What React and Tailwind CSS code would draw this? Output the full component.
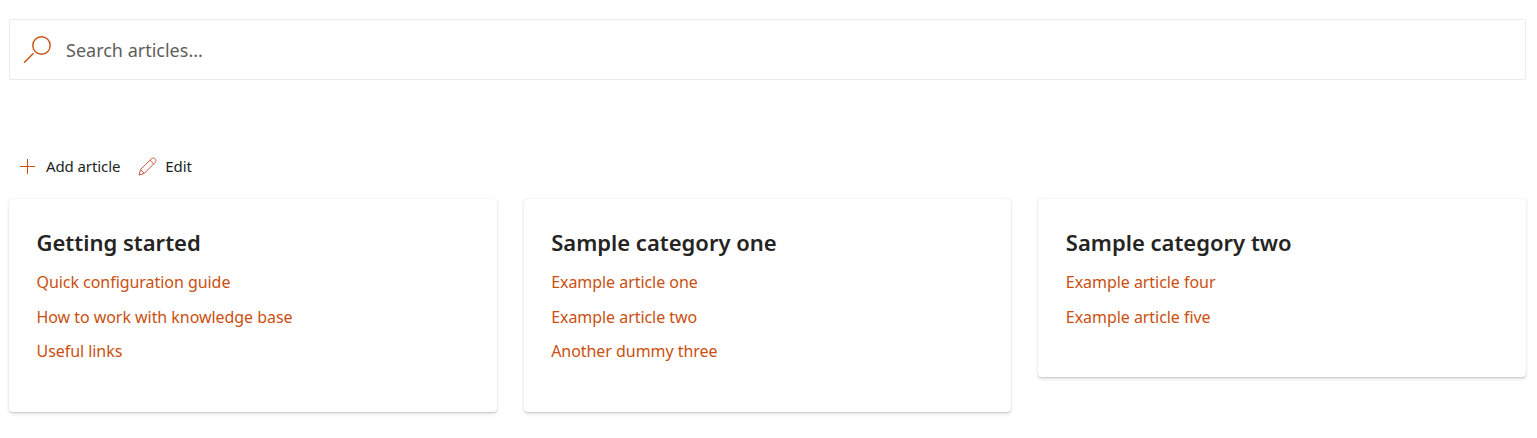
const categories = [
  { title: 'Getting started', links: ['Quick configuration guide', 'How to work with knowledge base', 'Useful links'] },
  { title: 'Sample category one', links: ['Example article one', 'Example article two', 'Another dummy three'] },
  { title: 'Sample category two', links: ['Example article four', 'Example article five'] },
]

export default function App() {
  return (
    <div className="min-h-screen bg-white pl-[9px] pr-[11px] pt-[19px] font-['Noto_Sans','Open_Sans',sans-serif]">
      {/* Search */}
      <div className="flex items-center h-[61px] border border-[#edebe9] rounded-[2px] pl-[13px]">
        <svg width="30" height="30" viewBox="0 0 30 30" fill="none" stroke="#ca5010" strokeWidth="1.4">
          <circle cx="18.5" cy="10.5" r="8.7" />
          <path d="M10.5 18.2 L1 27.8" />
        </svg>
        <span className="ml-[13px] text-[18px] leading-6 text-[#605e5c]">Search articles...</span>
      </div>

      {/* Toolbar */}
      <div className="flex items-center mt-[74px] h-[24px] pl-[11px] text-[15px] text-[#201f1e] tracking-[-0.1px]">
        <svg width="15" height="15" viewBox="0 0 15 15" fill="none" stroke="#ca5010" strokeWidth="1">
          <path d="M7.5 0 V15 M0 7.5 H15" />
        </svg>
        <span className="ml-[11px]">Add article</span>
        <svg className="ml-[18px]" width="19" height="19" viewBox="0 0 19 19" fill="none" stroke="#c8553d" strokeWidth="1">
          <path d="M1 18 L2.5 12.5 L13.5 1.8 C14.6 .8 16.2 .8 17.2 1.8 C18.2 2.9 18.2 4.4 17.2 5.4 L6.2 16.5 Z M2.5 12.5 L6.2 16.5 M12 3.3 L15.8 7" />
        </svg>
        <span className="ml-[8px]">Edit</span>
      </div>

      {/* Category cards */}
      <div className="grid grid-cols-3 gap-[27px] items-start mt-[21px]">
        {categories.map((c) => (
          <div
            key={c.title}
            className={`bg-white rounded-[4px] pl-[27.5px] pr-[27px] pt-[28px] shadow-[0_1.6px_3.6px_rgba(0,0,0,0.13),0_0.3px_0.9px_rgba(0,0,0,0.11)] ${c.links.length === 3 ? 'h-[213px]' : 'h-[178px]'}`}
          >
            <h2 className="-mt-px text-[22px] leading-[32px] font-semibold text-[#252423]">{c.title}</h2>
            <ul className="mt-[12px]">
              {c.links.map((l) => (
                <li key={l} className="h-[34.5px] text-[16px] leading-[24px] text-[#ca5010] tracking-[-0.05px]">{l}</li>
              ))}
            </ul>
          </div>
        ))}
      </div>
    </div>
  )
}
